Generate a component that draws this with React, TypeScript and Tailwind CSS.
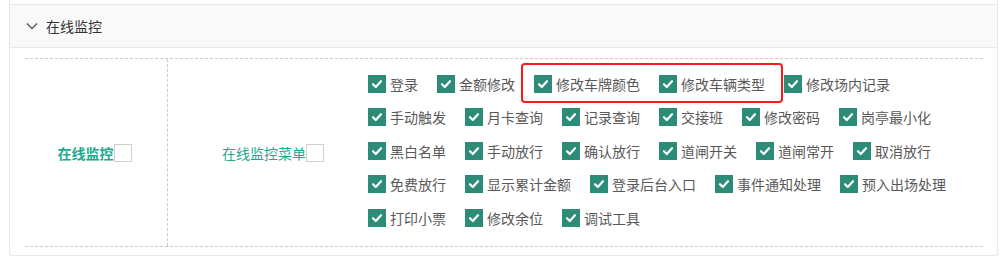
import React from 'react';

const menuItems = [
  '登录', '金额修改', '修改车牌颜色', '修改车辆类型', '修改场内记录',
  '手动触发', '月卡查询', '记录查询', '交接班', '修改密码', '岗亭最小化',
  '黑白名单', '手动放行', '确认放行', '道闸开关', '道闸常开', '取消放行',
  '免费放行', '显示累计金额', '登录后台入口', '事件通知处理', '预入出场处理',
  '打印小票', '修改余位', '调试工具',
];

function CheckedBox() {
  return (
    <span className="flex h-[18px] w-[18px] shrink-0 items-center justify-center bg-[#2d8c78]">
      <svg width="12" height="12" viewBox="0 0 12 12" fill="none">
        <polyline points="2,6.2 4.8,9 10,3.2" stroke="#fff" strokeWidth="2.2" strokeLinecap="round" strokeLinejoin="round" />
      </svg>
    </span>
  );
}

function EmptyBox() {
  return <span className="inline-block h-[18px] w-[18px] shrink-0 border border-[#d3cfcb] bg-white" />;
}

export default function App() {
  return (
    <div
      className="relative h-[262px] w-[1002px] overflow-hidden bg-white text-[14px]"
      style={{ fontFamily: '"Noto Sans CJK SC", "Noto Sans", sans-serif' }}
    >
      <div className="ml-[9px] w-[989px] rounded-b-[3px] border-x border-b border-[#e8e8e8] pt-[4px]">
        {/* section header */}
        <div className="flex h-[44px] items-center border-y border-[#e9e9e9] bg-[#f9f9f9] pl-[16px] text-[#333]">
          <svg width="12" height="8" viewBox="0 0 12 8" fill="none" className="mr-[8px]">
            <polyline points="1,1.5 6,6.5 11,1.5" stroke="#555" strokeWidth="1.3" />
          </svg>
          <span className="leading-none">在线监控</span>
        </div>

        {/* permission table */}
        <div className="ml-[15px] mr-[14px] mt-[10px] mb-[8px] flex border-y border-dashed border-[#cccccc]">
          <div className="flex w-[143px] shrink-0 items-center justify-center border-r border-dashed border-[#cccccc] pr-[3px]">
            <span className="font-bold leading-none text-[#1aab8e]">在线监控</span>
            <EmptyBox />
          </div>
          <div className="flex w-[200px] shrink-0 items-center justify-center pl-[10px]">
            <span className="leading-none text-[#1aab8e]">在线监控菜单</span>
            <EmptyBox />
          </div>
          <div className="flex flex-1 flex-wrap content-start pt-[8px] pb-[11.5px]">
            {menuItems.map((item) => (
              <label key={item} className="mr-[19px] flex h-[33.5px] items-center">
                <CheckedBox />
                <span className="ml-[4px] whitespace-nowrap leading-none text-[#595959]">{item}</span>
              </label>
            ))}
          </div>
        </div>
      </div>

      {/* red annotation frame */}
      <div className="absolute left-[521px] top-[63px] h-[40px] w-[262px] rounded-[4px] border-2 border-[#ff1a1a]" />
    </div>
  );
}
